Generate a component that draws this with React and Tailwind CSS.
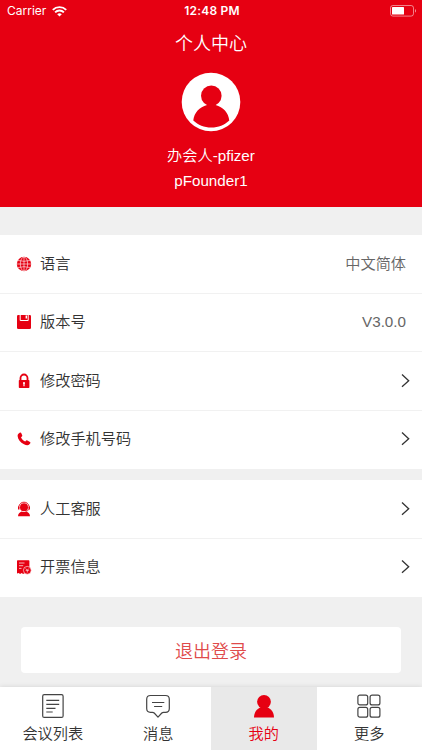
import React from "react";

const RED = "#e60012";

function WifiIcon() {
  return (
    <svg width="15" height="11" viewBox="0 0 15 11" fill="none" stroke="#fff" strokeWidth="1.9">
      <path d="M.8 3.900a9.500 9.500 0 0 1 13.400 0" />
      <path d="M3.100 6.400a6.200 6.200 0 0 1 8.800 0" />
      <path d="M7.500 10.600 5.200 8.300a3.300 3.300 0 0 1 4.600 0z" fill="#fff" stroke="none" />
    </svg>
  );
}

function BatteryIcon() {
  return (
    <svg width="27" height="12" viewBox="0 0 27 12">
      <rect x="0.5" y="0.5" width="23" height="10.6" rx="2.4" fill="none" stroke="#fff" strokeOpacity="0.5" />
      <rect x="2" y="2" width="12" height="7.6" rx="0.6" fill="#fff" />
      <path d="M25 4v3.6c1.4-.5 1.4-3.1 0-3.6z" fill="#fff" fillOpacity="0.55" />
    </svg>
  );
}

function Avatar() {
  return (
    <svg width="60" height="60" viewBox="0 0 60 60">
      <circle cx="30" cy="30" r="29.3" fill="#fff" />
      <circle cx="30.300" cy="23.800" r="10.300" fill={RED} />
      <path d="M12.300 48.600c.8-8 6.200-13.600 13.700-15.600v-2h8.600v2c7.500 2 12.900 7.600 13.700 15.600C43.500 53 37.500 55.600 30.300 55.600s-13.200-2.600-18-7z" fill={RED} />
    </svg>
  );
}

function GlobeIcon() {
  return (
    <svg width="16" height="16" viewBox="0 0 16 16">
      <circle cx="8" cy="8" r="7.200" fill={RED} />
      <g fill="none" stroke="#fff" strokeWidth="0.600">
        <path d="M8 1v14M1 8h14M2 4.500q6 1.600 12 0M2 11.500q6-1.600 12 0" />
        <ellipse cx="8" cy="8" rx="3.700" ry="7" />
      </g>
    </svg>
  );
}

function SaveIcon() {
  return (
    <svg width="16" height="16" viewBox="0 0 16 16">
      <path d="M2.300 1h11.400q1.300 0 1.300 1.300v11.400q0 1.300-1.300 1.300H2.300Q1 15 1 13.700V2.300Q1 1 2.300 1z" fill={RED} />
      <path d="M4.200 1v5.500h8V1" fill="none" stroke="#fff" strokeWidth="1" />
      <path d="M10.300 1.500v3" stroke="#fff" strokeWidth="1.400" />
    </svg>
  );
}

function LockIcon() {
  return (
    <svg width="16" height="16" viewBox="0 0 16 16">
      <path d="M4.500 8V5a3.500 3.500 0 0 1 7 0v3" fill="none" stroke={RED} strokeWidth="1.800" />
      <rect x="2.800" y="7" width="10.600" height="8" rx="0.700" fill={RED} />
      <path d="M7 9.300h2v1.500h-.4v2.400H7.400v-2.400H7z" fill="#fff" />
    </svg>
  );
}

function PhoneIcon() {
  return (
    <svg width="16" height="16" viewBox="0 0 16 16">
      <path d="M2.400 2.700 4 1.600q.8-.4 1.200.4l1 2.300q.3.700-.3 1.200l-.9.800c.6 1.900 2.200 3.500 4.200 4.300l1-1q.5-.5 1.200-.1l2.600 1.500q.8.500.3 1.300l-1.100 1.300c-1 1.100-3.200.8-5.200-.3C4.300 11.300 1.900 8.400 1.600 4.900c-.1-.9.200-1.700.8-2.200z" fill={RED} />
    </svg>
  );
}

function SupportIcon() {
  return (
    <svg width="16" height="16" viewBox="0 0 16 16">
      <path d="M2.700 7V5.800C3.500 2.500 5.600 1.200 8 1.200s4.500 1.300 5.300 4.600V7" fill="none" stroke={RED} strokeWidth="0.900" />
      <path d="M2 5.500h1.500v3H2zM12.500 5.500H14v3h-1.500z" fill={RED} />
      <circle cx="8" cy="6.300" r="4" fill={RED} />
      <path d="M2 15.200q.2-3.800 3.900-4.800 2.100 1.100 4.200 0 3.700 1 3.900 4.800z" fill={RED} />
      <path d="M12.900 8.200q-.8 2-3.300 2.200" fill="none" stroke={RED} strokeWidth="0.700" />
    </svg>
  );
}

function InvoiceIcon() {
  return (
    <svg width="16" height="16" viewBox="0 0 16 16">
      <path d="M1 2q0-.7.700-.7h11q.7 0 .7.700v12.600l-1.500-.6-1.500.9-1.600-.9-1.600.9-1.600-.9-1.500.9-1.500-.9-1.600.6z" fill={RED} />
      <path d="M3 4h5.500M3 6.700h4.200M3 9.400h2.500" stroke="#fff" strokeWidth="0.700" />
      <circle cx="11.300" cy="11.300" r="3.900" fill={RED} stroke="#fff" strokeWidth="0.600" />
      <path d="m9.700 9.500 1.600 1.700 1.600-1.700M9.700 11.400h3.200M11.300 11.200v2.300" fill="none" stroke="#fff" strokeWidth="0.600" />
    </svg>
  );
}

function Chevron() {
  return (
    <svg className="-mr-1 shrink-0" width="9" height="14" viewBox="0 0 9 14" fill="none" stroke="#333" strokeWidth="1.300">
      <path d="M1 .600 7.700 6.700 1 12.800" />
    </svg>
  );
}

function Row({ icon, label, value, last }) {
  return (
    <div className={"box-border flex h-[58.500px] items-center bg-white pl-4 pr-4 " + (last ? "pb-px" : "border-b-[1.500px] border-[#f1f1f1]")}>
      {icon}
      <span className="ml-2 flex-1 text-[15.200px] leading-6 text-[#333]">{label}</span>
      {value ? <span className="text-[15.200px] leading-6 text-[#666]">{value}</span> : <Chevron />}
    </div>
  );
}

function Tab({ icon, label, active }) {
  return (
    <div className={"flex flex-1 flex-col items-center pt-1.5 " + (active ? "bg-[#e9e9e9] text-[#e60012]" : "bg-white text-[#333]")}>
      {icon}
      <span className="mt-1 text-[15.200px] leading-[21px]">{label}</span>
    </div>
  );
}

function ListIcon() {
  return (
    <svg width="26" height="26" viewBox="0 0 26 26" fill="none" stroke="#444" strokeWidth="1.200">
      <rect x="2.700" y="1.700" width="20.400" height="22.700" rx="1.500" />
      <path d="M6.300 7.400h12.900M6.300 11.400h12.900M6.300 15.300h9.200M6.300 19h6.400" />
    </svg>
  );
}

function MessageIcon() {
  return (
    <svg width="26" height="26" viewBox="0 0 26 26" fill="none" stroke="#444" strokeWidth="1.200" strokeLinejoin="round">
      <path d="M5.500 2.500h15q3.800 0 3.800 3.800v9.300q0 3.800-3.800 3.800h-2q-1 0-1.700.6L13 24.200 9.200 20q-.7-.6-1.700-.6h-2q-3.800 0-3.800-3.800V6.300q0-3.800 3.800-3.800z" />
      <path d="M7 9.500h12.300M9.100 13.500h8.100" />
    </svg>
  );
}

function PersonIcon() {
  return (
    <svg width="26" height="26" viewBox="0 0 26 26" fill={RED}>
      <circle cx="13" cy="8.800" r="6.900" />
      <path d="M3 24.600c0-5 2.600-8.600 7.300-10.500h5.400c4.700 1.900 7.300 5.500 7.300 10.500z" />
    </svg>
  );
}

function GridIcon() {
  return (
    <svg width="26" height="26" viewBox="0 0 26 26" fill="none" stroke="#444" strokeWidth="1.200">
      <rect x="1.900" y="2.100" width="9.800" height="9.800" rx="2" />
      <rect x="14.100" y="2.100" width="9.800" height="9.800" rx="2" />
      <rect x="1.900" y="14.400" width="9.800" height="9.800" rx="2" />
      <rect x="14.100" y="14.400" width="9.800" height="9.800" rx="2" />
    </svg>
  );
}

export default function App() {
  return (
    <div className="flex h-[750px] w-[422px] flex-col overflow-hidden bg-[#f0f0f0] font-['Liberation_Sans','Noto_Sans_CJK_SC',sans-serif] font-[350]">
      <header className="flex h-[207px] shrink-0 flex-col items-center bg-[#e60012] text-white">
        <div className="grid h-[22px] w-full grid-cols-3 items-center pl-[7px] pr-[5px] font-[Inter,sans-serif] text-[12px]">
          <div className="flex items-center gap-1.5 text-[12px] font-normal">
            <span>Carrier</span>
            <WifiIcon />
          </div>
          <span className="text-center font-semibold tracking-[0.200px]">12:48 PM</span>
          <div className="flex justify-end"><BatteryIcon /></div>
        </div>
        <h1 className="mt-2 text-[18px] leading-7">个人中心</h1>
        <div className="mt-[14px]"><Avatar /></div>
        <div className="mt-[11px] text-[15.200px] leading-[25px]">
          <p className="text-center">办会人-pfizer</p>
          <p className="text-center">pFounder1</p>
        </div>
      </header>

      <section className="mt-[28px] shrink-0">
        <Row icon={<GlobeIcon />} label="语言" value="中文简体" />
        <Row icon={<SaveIcon />} label="版本号" value="V3.0.0" />
        <Row icon={<LockIcon />} label="修改密码" />
        <Row icon={<PhoneIcon />} label="修改手机号码" last />
      </section>
      <section className="mt-[11px] shrink-0">
        <Row icon={<SupportIcon />} label="人工客服" />
        <Row icon={<InvoiceIcon />} label="开票信息" last />
      </section>

      <button className="mx-[21px] mt-[30px] h-[46px] shrink-0 rounded-[4px] bg-white pt-1 text-[18px] text-[#df4b4b]">退出登录</button>

      <nav className="mt-auto flex h-[63px] shrink-0 shadow-[0_0_5px_rgba(0,0,0,0.12)]">
        <Tab icon={<ListIcon />} label="会议列表" />
        <Tab icon={<MessageIcon />} label="消息" />
        <Tab icon={<PersonIcon />} label="我的" active />
        <Tab icon={<GridIcon />} label="更多" />
      </nav>
    </div>
  );
}
